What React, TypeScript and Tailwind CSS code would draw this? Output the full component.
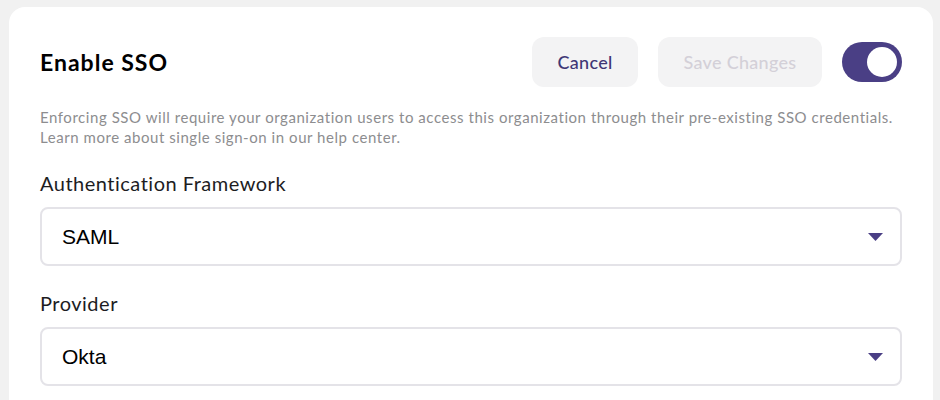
function CaretIcon(props: React.ComponentPropsWithoutRef<'svg'>) {
  return (
    <svg viewBox="0 0 15 8" aria-hidden="true" {...props}>
      <path d="M0 0h15L7.5 8Z" fill="currentColor" />
    </svg>
  )
}

function SelectField({ label, value }: { label: string; value: string }) {
  return (
    <div className="flex flex-col">
      <label className="text-[20px] leading-6 tracking-[0.5px] text-[#1d1d1f]">{label}</label>
      <div className="mt-[12px] flex h-[59px] items-center justify-between rounded-lg border-2 border-[#e4e3e8] bg-white pr-[17px] pl-5">
        <span className="font-['Liberation_Sans',Arial,sans-serif] text-[21px] text-black">
          {value}
        </span>
        <CaretIcon className="h-[8px] w-[15px] text-[#4a3f85]" />
      </div>
    </div>
  )
}

export default function App() {
  return (
    <div className="min-h-[400px] bg-[#f1f1f1] pt-[7px] pr-[7px] pl-[9px] font-['Lato',sans-serif]">
      <div className="flex flex-col rounded-2xl bg-white pt-[30px] pr-[31px] pb-10 pl-[31px]">
        <div className="flex h-[50px] items-center justify-between">
          <h1 className="text-[23px] font-bold tracking-[1px] text-black">Enable SSO</h1>
          <div className="flex items-center">
            <button
              type="button"
              className="h-[50px] w-[106px] rounded-xl bg-[#f3f3f4] text-[18px] font-medium tracking-[0.3px] text-[#3f3776]"
            >
              Cancel
            </button>
            <button
              type="button"
              disabled
              className="ml-5 h-[50px] w-[164px] rounded-xl bg-[#f3f3f4] text-[18px] font-medium tracking-[0.3px] text-[#d3d0d8]"
            >
              Save Changes
            </button>
            <button
              type="button"
              aria-label="Toggle SSO"
              className="ml-5 flex h-10 w-[60px] items-center justify-end rounded-full bg-[#4a3f85] pr-[5px]"
            >
              <span className="h-[30px] w-[30px] rounded-full bg-white" />
            </button>
          </div>
        </div>
        <p className="mt-5 text-[15px] leading-5 tracking-[0.55px] text-[#8d8d8f]">
          Enforcing SSO will require your organization users to access this organization through their pre-existing SSO credentials.
          <br />
          Learn more about single sign-on in our help center.
        </p>
        <div className="mt-6 flex flex-col gap-[25px]">
          <SelectField label="Authentication Framework" value="SAML" />
          <SelectField label="Provider" value="Okta" />
        </div>
      </div>
    </div>
  )
}
